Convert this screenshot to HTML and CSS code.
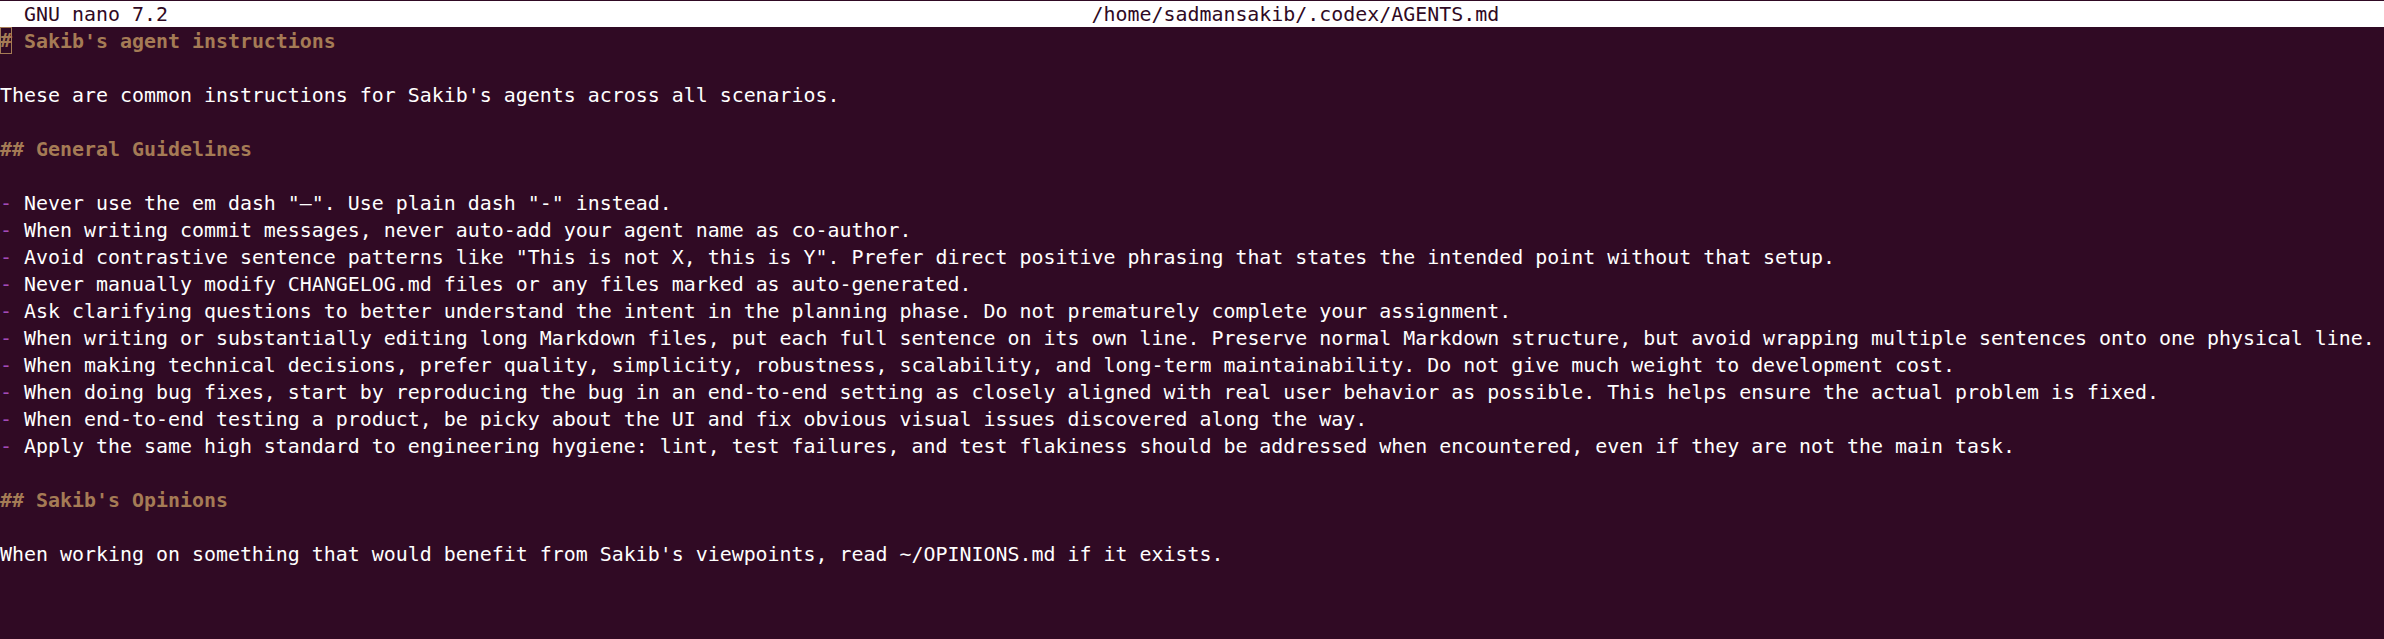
FILE: index.html
```html
<!DOCTYPE html>
<html lang="en">
<head>
<meta charset="utf-8">
<title>GNU nano 7.2 - AGENTS.md</title>
<link rel="stylesheet" href="styles.css">
</head>
<body>
<div class="terminal">
  <div class="titlebar">  GNU nano 7.2                                                                             /home/sadmansakib/.codex/AGENTS.md</div>
  <div class="editor">
    <div class="line heading"><span class="cursor">#</span> Sakib's agent instructions</div>
    <div class="line blank"></div>
    <div class="line">These are common instructions for Sakib's agents across all scenarios.</div>
    <div class="line blank"></div>
    <div class="line heading">## General Guidelines</div>
    <div class="line blank"></div>
    <div class="line"><span class="bullet">-</span> Never use the em dash "—". Use plain dash "-" instead.</div>
    <div class="line"><span class="bullet">-</span> When writing commit messages, never auto-add your agent name as co-author.</div>
    <div class="line"><span class="bullet">-</span> Avoid contrastive sentence patterns like "This is not X, this is Y". Prefer direct positive phrasing that states the intended point without that setup.</div>
    <div class="line"><span class="bullet">-</span> Never manually modify CHANGELOG.md files or any files marked as auto-generated.</div>
    <div class="line"><span class="bullet">-</span> Ask clarifying questions to better understand the intent in the planning phase. Do not prematurely complete your assignment.</div>
    <div class="line"><span class="bullet">-</span> When writing or substantially editing long Markdown files, put each full sentence on its own line. Preserve normal Markdown structure, but avoid wrapping multiple sentences onto one physical line.</div>
    <div class="line"><span class="bullet">-</span> When making technical decisions, prefer quality, simplicity, robustness, scalability, and long-term maintainability. Do not give much weight to development cost.</div>
    <div class="line"><span class="bullet">-</span> When doing bug fixes, start by reproducing the bug in an end-to-end setting as closely aligned with real user behavior as possible. This helps ensure the actual problem is fixed.</div>
    <div class="line"><span class="bullet">-</span> When end-to-end testing a product, be picky about the UI and fix obvious visual issues discovered along the way.</div>
    <div class="line"><span class="bullet">-</span> Apply the same high standard to engineering hygiene: lint, test failures, and test flakiness should be addressed when encountered, even if they are not the main task.</div>
    <div class="line blank"></div>
    <div class="line heading">## Sakib's Opinions</div>
    <div class="line blank"></div>
    <div class="line">When working on something that would benefit from Sakib's viewpoints, read ~/OPINIONS.md if it exists.</div>
  </div>
</div>
</body>
</html>
```

FILE: styles.css
```css
html, body {
  margin: 0;
  padding: 0;
  background: #300a24;
}

.terminal {
  width: 2384px;
  height: 639px;
  overflow: hidden;
  background: #300a24;
  font-family: "DejaVu Sans Mono", "Liberation Mono", monospace;
  font-size: 19.932px;
  color: #ffffff;
  padding-top: 1px;
  box-sizing: border-box;
}

.titlebar {
  height: 26px;
  line-height: 26px;
  background: #ffffff;
  color: #300a24;
  white-space: pre;
  overflow: hidden;
  padding-top: 1px;
  box-sizing: border-box;
}

.editor {
  display: flex;
  flex-direction: column;
}

.line {
  height: 27px;
  line-height: 27px;
  padding-top: 1px;
  box-sizing: border-box;
  white-space: pre;
  overflow: visible;
}

.heading {
  color: #a57b55;
  font-weight: bold;
}

.bullet {
  color: #a34bb8;
}

.cursor {
  display: inline-block;
  width: 12px;
  height: 27px;
  margin-top: -1px;
  vertical-align: top;
  box-shadow: inset 0 0 0 1px #a57b55;
}
```
